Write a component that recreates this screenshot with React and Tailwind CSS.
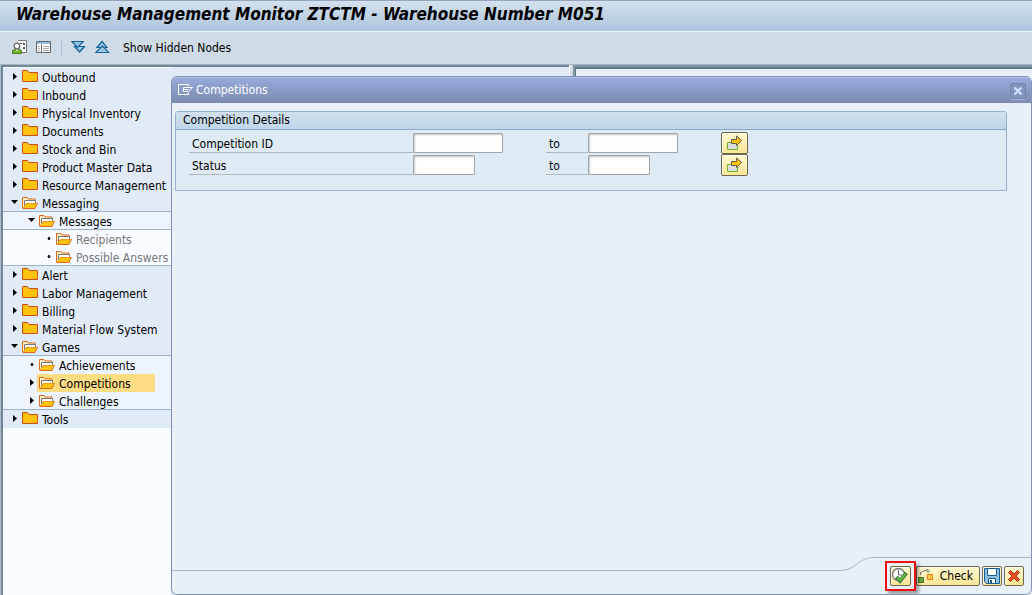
import React, { useState } from "react";
import clsx from "clsx";

const NODES = [
  { name: "Outbound", level: 0, state: "closed" },
  { name: "Inbound", level: 0, state: "closed" },
  { name: "Physical Inventory", level: 0, state: "closed" },
  { name: "Documents", level: 0, state: "closed" },
  { name: "Stock and Bin", level: 0, state: "closed" },
  { name: "Product Master Data", level: 0, state: "closed" },
  { name: "Resource Management", level: 0, state: "closed" },
  { name: "Messaging", level: 0, state: "open", line: true },
  { name: "Messages", level: 1, state: "open", line: true },
  { name: "Recipients", level: 2, state: "leaf" },
  { name: "Possible Answers", level: 2, state: "leaf", line: true },
  { name: "Alert", level: 0, state: "closed" },
  { name: "Labor Management", level: 0, state: "closed" },
  { name: "Billing", level: 0, state: "closed" },
  { name: "Material Flow System", level: 0, state: "closed" },
  { name: "Games", level: 0, state: "open", line: true },
  { name: "Achievements", level: 1, state: "leaf" },
  { name: "Competitions", level: 1, state: "closed" },
  { name: "Challenges", level: 1, state: "closed", line: true },
  { name: "Tools", level: 0, state: "closed" },
];

const LEVEL_BG = ["bg-[#e1ebf8]", "bg-[#edf4fd]", "bg-[#f8fbff]"];
const LEVEL_INDENT = ["pl-0", "pl-[17px]", "pl-[34px]"];

const yellowButton =
  "flex items-center justify-center rounded-[2px] border border-[#6b6650] bg-linear-to-b from-[#fff8d2] to-[#fbe694] shadow-[inset_1px_1px_0_#fffbe6]";

function FolderIcon({ open }) {
  if (!open) {
    return (
      <svg width="16" height="14" viewBox="0 0 16 14" className="mt-[2px] shrink-0">
        <path d="M.5 11.500V.5h5l1.500 2h8.500v9z" fill="#ffc20e" stroke="#cc4e1c" />
      </svg>
    );
  }
  return (
    <svg width="16" height="14" viewBox="0 0 16 14" className="mt-[2px] shrink-0">
      <path d="M.5 12.500V1.500h4.500l1 1.500h7v4" fill="#fff0c8" stroke="#dd6b1e" />
      <path d="M2.500 10V4.500h11V7" fill="#fff" stroke="#777" />
      <path d="M1 12.500 4 7h11.500L13 12.500z" fill="#ffc20e" />
      <path d="M1 12.500h12L15.500 7" fill="none" stroke="#dd6b1e" />
      <path d="M1.500 12 4.500 7.500H15" fill="none" stroke="#e89a1c" />
    </svg>
  );
}

function NodeMarker({ state }) {
  return (
    <svg width="17" height="18" viewBox="0 0 17 18" className="shrink-0">
      {state === "closed" && <path d="M10 5v7l4-3.500z" fill="#000" />}
      {state === "open" && <path d="M8 6h7l-3.500 4z" fill="#000" />}
      {state === "leaf" && <path d="M11 7h2v3h-2zM10.500 8h3v1h-3z" fill="#222" />}
    </svg>
  );
}

function TreeNode({ node, selected, onSelect }) {
  return (
    <li
      className={clsx(
        "flex h-[18px] items-start",
        LEVEL_BG[node.level],
        LEVEL_INDENT[node.level],
        node.line && "border-b border-[#9cb3cb]"
      )}
    >
      <NodeMarker state={node.state} />
      <button
        type="button"
        onClick={() => onSelect(node.name)}
        className={clsx(
          "flex h-full shrink-0 items-start gap-1 whitespace-nowrap pl-[2px] leading-5",
          selected ? "bg-[#fedc82] pr-6" : "pr-0",
          node.level === 2 && "text-[#777]"
        )}
      >
        <FolderIcon open={node.state === "open" || node.level > 0} />
        {node.name}
      </button>
    </li>
  );
}

function SelectionRow({ id, label, size }) {
  const input =
    "h-5 rounded-[1px] border border-[#a3a6a8] bg-white px-1 shadow-[inset_1px_1px_2px_#c4c4c4] outline-none";
  return (
    <div className="flex h-[22px] items-center">
      <label htmlFor={id} className="h-5 w-[224px] border-b border-[#b5b8ba] pl-[3px] leading-[22px]">
        {label}
      </label>
      <div className="w-[133px]">
        <input id={id} className={clsx(input, "block", size)} />
      </div>
      <label htmlFor={id + "-to"} className="h-5 w-[42px] border-b border-[#b5b8ba] pl-[3px] leading-[22px]">
        to
      </label>
      <div className="w-[133px]">
        <input id={id + "-to"} className={clsx(input, "block", size)} />
      </div>
      <button type="button" aria-label={"Multiple selection " + label} className={clsx(yellowButton, "h-[22px] w-[27px]")}>
        <svg width="17" height="16" viewBox="0 0 17 16">
          <path d="M1.500 7.500h10v7h-10z" fill="#dcdcdc" stroke="#6fb52c" />
          <path d="M5.500 4.500h5V1l5 4.500-5 5V8.500h-5z" fill="#ffc20e" stroke="#5f5a50" />
        </svg>
      </button>
    </div>
  );
}

function Toolbar() {
  return (
    <div className="flex h-8 items-center bg-[#cfdce7] pl-3">
      <button type="button" aria-label="Variant">
        <svg width="16" height="16" viewBox="0 0 16 16">
          <path d="M6 .5h8.500v12H10" fill="#fff" stroke="#777" />
          <path d="M8 3h2v1H8zM11 3h2v2h-2zM11 7h2v2h-2z" fill="#555" />
          <circle cx="5" cy="6" r="2.800" fill="#fff" stroke="#666" strokeWidth="1.300" />
          <path d="M.5 13.500v-3l2-1h5l2 1v3z" fill="#71b62d" stroke="#467f23" />
          <path d="m3.500 9.500 1.500 1.500 1.500-1.500z" fill="#fff" />
        </svg>
      </button>
      <button type="button" aria-label="Select layout" className="ml-2">
        <svg width="16" height="16" viewBox="0 0 16 16">
          <path d="M.5 1.500h14v11H.5z" fill="#fff" stroke="#666" />
          <path d="M1 2h13v2H1z" fill="#93c0de" />
          <path d="M5.500 4v8.500" stroke="#777" />
          <path d="M2 6.500h2M2 8.500h2M2 10.500h2M7 6.500h6M7 8.500h6M7 10.500h6" stroke="#aaa" />
        </svg>
      </button>
      <span className="ml-[9px] h-[14px] w-px bg-[#9fbdd8]" />
      <button type="button" aria-label="Expand all" className="ml-[9px]">
        <svg width="15" height="16" viewBox="0 0 15 16" stroke="#11639a" strokeWidth="1.200">
          <path d="M3.500 6.500h10l-5 5.500z" fill="#9bc6e6" />
          <path d="M.8 1.500h11.500l-5.800 6z" fill="#9bc6e6" />
        </svg>
      </button>
      <button type="button" aria-label="Collapse all" className="ml-[9px]">
        <svg width="15" height="16" viewBox="0 0 15 16" stroke="#11639a" strokeWidth="1.200">
          <path d="M2 7.500h10L7 1.500z" fill="#9bc6e6" />
          <path d="M.8 12.500h13L7.500 6z" fill="#9bc6e6" />
        </svg>
      </button>
      <button type="button" className="ml-[13px]">
        Show Hidden Nodes
      </button>
    </div>
  );
}

function DialogFooter() {
  return (
    <div className="flex h-[37px] items-end">
      <div className="h-6 flex-1 border-t border-[#a9b6ca]" />
      <svg width="36" height="37" viewBox="0 0 36 37" fill="none">
        <path d="M0 13.500c11 0 14-4 20-8s9-5 16-5" stroke="#a9b6ca" />
      </svg>
      <div className="flex h-full items-start border-t border-[#a9b6ca] pl-[10px] pr-[7px] pt-[3px]">
        <div className="z-10 border-2 border-[#ec1111] p-[3px] shadow-[3px_3px_3px_#0005]">
          <button type="button" aria-label="Execute" className={clsx(yellowButton, "h-5 w-[21px]")}>
            <svg width="18" height="18" viewBox="0 0 18 18" fill="none">
              <circle cx="7.500" cy="7.500" r="6" fill="#fff" stroke="#777" strokeWidth="1.400" />
              <path d="M7.500 3v5H11" stroke="#666" />
              <path d="m5.500 10 3.500 4 6.500-8" stroke="#29732d" strokeWidth="3.600" />
              <path d="m6 10.500 3 3L15 6.500" stroke="#69bc43" strokeWidth="2" />
            </svg>
          </button>
        </div>
        <div className="flex gap-[2px] pt-[5px]">
          <button type="button" className={clsx(yellowButton, "h-5 gap-[6px] pl-0 pr-[6px]")}>
            <svg width="17" height="16" viewBox="0 0 17 16" fill="none">
              <path d="M1.500 9.500h5v5h-5z" fill="#63a53a" stroke="#42722c" />
              <path d="M10.500 6.500h5v5h-5z" fill="#ffc844" stroke="#ee7819" />
              <path d="M3.500 7V4.500L7 3l4-1.500V4M9 2.500l2 2 2-2" stroke="#777" />
            </svg>
            <span className="leading-5">Check</span>
          </button>
          <button type="button" aria-label="Save" className={clsx(yellowButton, "h-5 w-5")}>
            <svg width="16" height="16" viewBox="0 0 16 16">
              <path d="M.5.5h15v15h-13l-2-2z" fill="#8fc0e2" stroke="#155d91" />
              <path d="M3.500.5h9v7h-9z" fill="#fff" stroke="#155d91" />
              <path d="M4.500 10.500h7v5h-7z" fill="#fff" stroke="#155d91" />
              <path d="M6 12h2v3H6z" fill="#155d91" />
            </svg>
          </button>
          <button type="button" aria-label="Cancel" className={clsx(yellowButton, "h-5 w-5")}>
            <svg width="14" height="14" viewBox="0 0 14 14">
              <path d="m1.500 3.500 2-2L7 5l3.500-3.500 2 2L9 7l3.500 3.500-2 2L7 9l-3.500 3.500-2-2L5 7z" fill="#e8501c" stroke="#b32b16" />
            </svg>
          </button>
        </div>
      </div>
    </div>
  );
}

function CompetitionDialog() {
  return (
    <section
      role="dialog"
      aria-label="Competitions"
      className="absolute bottom-0 left-[171px] right-0 top-[76px] flex flex-col overflow-hidden rounded-[6px] border border-[#8292b4] bg-[#e8eff7]"
    >
      <header className="flex h-[26px] items-center border-t border-[#b3c1e6] bg-linear-to-b from-[#98aadc] to-[#7b8bb0] pl-[6px] pr-[5px] text-white">
        <svg width="15" height="13" viewBox="0 0 15 13" fill="none" stroke="#fff">
          <path d="M10.500 2.500V.5h-10v10h10v-2" />
          <path d="M5.500 3.500h9l-4 4h-5zM5.500 5.500h5" />
        </svg>
        <h2 className="ml-[3px] flex-1 pb-px">Competitions</h2>
        <button type="button" aria-label="Close" className="flex h-4 w-4 items-center justify-center rounded-[2px] border border-[#7082a9] bg-[#8293bd] shadow-[0_1px_0_#a3b3dc]">
          <svg width="10" height="10" viewBox="0 0 10 10">
            <path d="m1.500 1.500 7 7m0-7-7 7" stroke="#c9dcff" strokeWidth="2.400" />
          </svg>
        </button>
      </header>
      <main className="flex-1 pl-[3px] pr-6 pt-2">
        <fieldset className="rounded-t-[3px] border border-[#93b2d0] bg-[#deebf4] pb-[14px]">
          <div className="h-[18px] border-b border-[#88a9ca] bg-linear-to-b from-[#d0e0ee] to-[#bfd6ea] pl-[7px] leading-4">
            Competition Details
          </div>
          <div className="pl-[13px] pt-[2px]">
            <SelectionRow id="competition-id" label="Competition ID" size="w-[90px]" />
            <SelectionRow id="status" label="Status" size="w-[62px]" />
          </div>
        </fieldset>
      </main>
      <DialogFooter />
    </section>
  );
}

export default function App() {
  const [selected, setSelected] = useState("Competitions");

  return (
    <div className="relative flex h-screen flex-col overflow-hidden bg-[#cfdce7] font-['DejaVu_Sans_Condensed','DejaVu_Sans',sans-serif] text-[12px] leading-4 text-black">
      <header className="h-8 border-b border-t border-b-[#edf4fa] border-t-[#93a5bd] bg-linear-to-b from-[#d3e1ed] to-[#adc4dd] pl-4">
        <h1 className="text-[17px] font-bold italic leading-[26px]">
          Warehouse Management Monitor ZTCTM - Warehouse Number M051
        </h1>
      </header>
      <Toolbar />

      <div className="flex flex-1 border-l border-t border-l-[#aabccc] border-t-[#a3b4c3]">
        <nav className="w-[568px] border-l-2 border-t-2 border-[#718797] bg-[#e1ebf8]">
          <ul className="h-full w-[168px] bg-[#f8fbff] pt-px">
            {NODES.map((node) => (
              <TreeNode key={node.name} node={node} selected={node.name === selected} onSelect={setSelected} />
            ))}
          </ul>
        </nav>
        <div className="w-1 border-l border-white" />
        <div className="flex-1 border-l-2 border-t-2 border-[#8297a5]">
          <div className="h-full border-l border-t-2 border-[#5f7887] bg-[#e8eff7]" />
        </div>
      </div>

      <CompetitionDialog />
    </div>
  );
}
